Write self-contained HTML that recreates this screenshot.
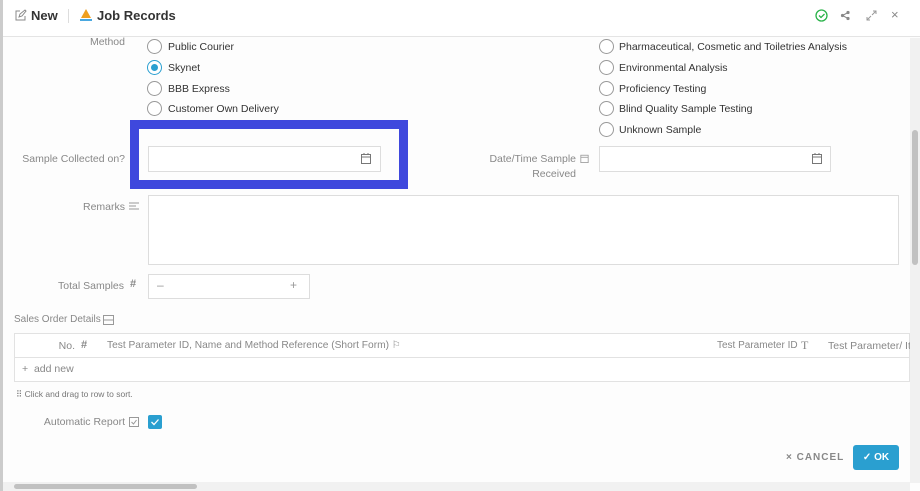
<!DOCTYPE html>
<html><head><style>
*{box-sizing:border-box;margin:0;padding:0}
body{width:920px;height:491px;overflow:hidden;background:#fdfdfd;font-family:"Liberation Sans",sans-serif;position:relative;color:#444}
.a{position:absolute;white-space:nowrap}
.lbl{font-size:10.5px;color:#888;text-align:right}
.opt{font-size:10.5px;color:#333}
.rad{position:absolute;width:15px;height:15px;border:1px solid #999;border-radius:50%;background:#fff}
.inp{position:absolute;border:1px solid #ddd;background:#fff}
</style></head><body>
<div class="a" style="left:0;top:0;width:3px;height:491px;background:#ccc"></div>
<div class="a" style="left:3px;top:0;width:917px;height:37px;background:#fff;border-bottom:1px solid #e4e4e4"></div>
<svg class="a" style="left:14px;top:9px" width="13" height="13" viewBox="0 0 13 13"><path d="M6 2H2v9h9V7M5 8l1-3 5-4 1 1-4 5z" fill="none" stroke="#888" stroke-width="1"/></svg>
<div class="a" style="left:31px;top:8px;font-size:13px;font-weight:bold;color:#333">New</div>
<div class="a" style="left:68px;top:9px;width:1px;height:14px;background:#ddd"></div>
<svg class="a" style="left:79px;top:8px" width="14" height="14" viewBox="0 0 14 14"><path d="M7 1L12 10H2z" fill="#f0a020"/><rect x="1" y="11" width="12" height="2" fill="#4aa8e0"/></svg>
<div class="a" style="left:97px;top:8px;font-size:13px;font-weight:bold;color:#333">Job Records</div>
<svg class="a" style="left:815px;top:9px" width="13" height="13" viewBox="0 0 13 13"><circle cx="6.5" cy="6.5" r="5.5" fill="none" stroke="#2bb34a" stroke-width="1.3"/><path d="M4 6.5l2 2 3.5-3.5" fill="none" stroke="#2bb34a" stroke-width="1.3"/></svg>
<svg class="a" style="left:840px;top:10px" width="11" height="11" viewBox="0 0 11 11"><circle cx="8" cy="2.5" r="1.6" fill="#888"/><circle cx="2.5" cy="5.5" r="1.6" fill="#888"/><circle cx="8" cy="8.5" r="1.6" fill="#888"/><path d="M8 2.5L2.5 5.5 8 8.5" stroke="#888" fill="none"/></svg>
<svg class="a" style="left:866px;top:10px" width="11" height="11" viewBox="0 0 11 11"><path d="M6 5l4-4M7 1h3v3M5 6l-4 4M1 7v3h3" stroke="#999" fill="none"/></svg>
<div class="a" style="left:891px;top:7px;font-size:13px;color:#888">×</div>
<div class="a lbl" style="right:795px;top:36px">Method</div>
<div class="rad" style="left:147px;top:39px"></div><div class="a opt" style="left:168px;top:41px">Public Courier</div>
<div class="rad" style="left:147px;top:60px;border-color:#2a9fd0"></div><div class="a" style="left:151px;top:64px;width:7px;height:7px;border-radius:50%;background:#2a9fd0"></div><div class="a opt" style="left:168px;top:62px">Skynet</div>
<div class="rad" style="left:147px;top:81px"></div><div class="a opt" style="left:168px;top:83px">BBB Express</div>
<div class="rad" style="left:147px;top:101px"></div><div class="a opt" style="left:168px;top:103px">Customer Own Delivery</div>
<div class="rad" style="left:599px;top:39px"></div><div class="a opt" style="left:619px;top:41px">Pharmaceutical, Cosmetic and Toiletries Analysis</div>
<div class="rad" style="left:599px;top:60px"></div><div class="a opt" style="left:619px;top:62px">Environmental Analysis</div>
<div class="rad" style="left:599px;top:81px"></div><div class="a opt" style="left:619px;top:83px">Proficiency Testing</div>
<div class="rad" style="left:599px;top:101px"></div><div class="a opt" style="left:619px;top:103px">Blind Quality Sample Testing</div>
<div class="rad" style="left:599px;top:122px"></div><div class="a opt" style="left:619px;top:124px">Unknown Sample</div>
<div class="a lbl" style="right:795px;top:153px">Sample Collected on?</div>
<div class="a" style="left:130px;top:120px;width:278px;height:69px;border:9px solid #3f48dd"></div>
<div class="inp" style="left:148px;top:146px;width:233px;height:26px"></div>
<svg class="a" style="left:361px;top:153px" width="10" height="11" viewBox="0 0 10 11"><rect x="0.5" y="1.5" width="9" height="9" fill="none" stroke="#777"/><path d="M0.5 4h9M3 0v2M7 0v2" stroke="#777"/></svg>
<div class="a lbl" style="right:344px;top:153px">Date/Time Sample</div>
<svg class="a" style="left:580px;top:154px" width="9" height="9" viewBox="0 0 10 11"><rect x="0.5" y="1.5" width="9" height="9" fill="none" stroke="#999"/><path d="M0.5 4h9" stroke="#999"/></svg>
<div class="a lbl" style="right:344px;top:168px">Received</div>
<div class="inp" style="left:599px;top:146px;width:232px;height:26px"></div>
<svg class="a" style="left:812px;top:153px" width="10" height="11" viewBox="0 0 10 11"><rect x="0.5" y="1.5" width="9" height="9" fill="none" stroke="#777"/><path d="M0.5 4h9M3 0v2M7 0v2" stroke="#777"/></svg>
<div class="a lbl" style="right:795px;top:201px">Remarks</div>
<svg class="a" style="left:129px;top:202px" width="10" height="9" viewBox="0 0 10 9"><path d="M0 1h10M0 4h7M0 7h10" stroke="#999"/></svg>
<div class="inp" style="left:148px;top:195px;width:751px;height:70px"></div>
<div class="a lbl" style="right:796px;top:280px">Total Samples</div>
<div class="a" style="left:130px;top:278px;font-size:11px;color:#888;font-weight:bold">#</div>
<div class="inp" style="left:148px;top:274px;width:162px;height:25px"></div>
<div class="a" style="left:157px;top:278px;font-size:12px;color:#999">–</div>
<div class="a" style="left:290px;top:278px;font-size:12px;color:#999">+</div>
<div class="a" style="left:14px;top:314px;font-size:10px;color:#888">Sales Order Details</div>
<svg class="a" style="left:103px;top:315px" width="11" height="10" viewBox="0 0 11 10"><rect x="0.5" y="0.5" width="10" height="9" fill="none" stroke="#999"/><path d="M0.5 5h10" stroke="#999"/></svg>
<div class="a" style="left:14px;top:333px;width:896px;height:49px;border:1px solid #e2e2e2;background:#fff"></div>
<div class="a" style="left:14px;top:357px;width:896px;height:1px;background:#e2e2e2"></div>
<div class="a lbl" style="right:845px;top:340px">No.</div>
<div class="a" style="left:81px;top:339px;font-size:11px;color:#888;font-weight:bold">#</div>
<div class="a" style="left:107px;top:340px;font-size:10.2px;color:#888">Test Parameter ID, Name and Method Reference (Short Form) ⚐</div>
<div class="a" style="left:717px;top:340px;font-size:10px;color:#888">Test Parameter ID</div>
<div class="a" style="left:801px;top:338px;font-size:12px;color:#888;font-family:'Liberation Serif',serif">T</div>
<div class="a" style="left:828px;top:340px;width:82px;overflow:hidden;font-size:10.5px;color:#888">Test Parameter/ Item</div>
<div class="a" style="left:22px;top:363px;font-size:10.5px;color:#888">+ &nbsp;add new</div>
<div class="a" style="left:16px;top:389px;font-size:8.5px;color:#777">⠿ Click and drag to row to sort.</div>
<div class="a lbl" style="right:795px;top:416px">Automatic Report</div>
<svg class="a" style="left:129px;top:417px" width="10" height="10" viewBox="0 0 10 10"><rect x="0.5" y="0.5" width="9" height="9" fill="none" stroke="#999"/><path d="M2.5 5l2 2 3-4" stroke="#999" fill="none"/></svg>
<div class="a" style="left:148px;top:415px;width:14px;height:14px;background:#2a9fd0;border-radius:2px"></div>
<svg class="a" style="left:150px;top:417px" width="10" height="10" viewBox="0 0 10 10"><path d="M1.5 5l2.5 2.5L8.5 2.5" stroke="#fff" stroke-width="1.3" fill="none"/></svg>
<div class="a" style="left:786px;top:452px;font-size:10px;color:#888;font-weight:bold;letter-spacing:1px">× CANCEL</div>
<div class="a" style="left:853px;top:445px;width:46px;height:25px;background:#2a9fd0;border-radius:3px;color:#fff;font-size:10px;font-weight:bold;text-align:center;line-height:25px">✓ OK</div>
<div class="a" style="left:910px;top:38px;width:10px;height:445px;background:#f1f1f1"></div>
<div class="a" style="left:912px;top:130px;width:6px;height:135px;background:#c1c1c1;border-radius:3px"></div>
<div class="a" style="left:3px;top:482px;width:907px;height:9px;background:#f1f1f1"></div>
<div class="a" style="left:14px;top:484px;width:183px;height:5px;background:#c1c1c1;border-radius:3px"></div>
</body></html>
